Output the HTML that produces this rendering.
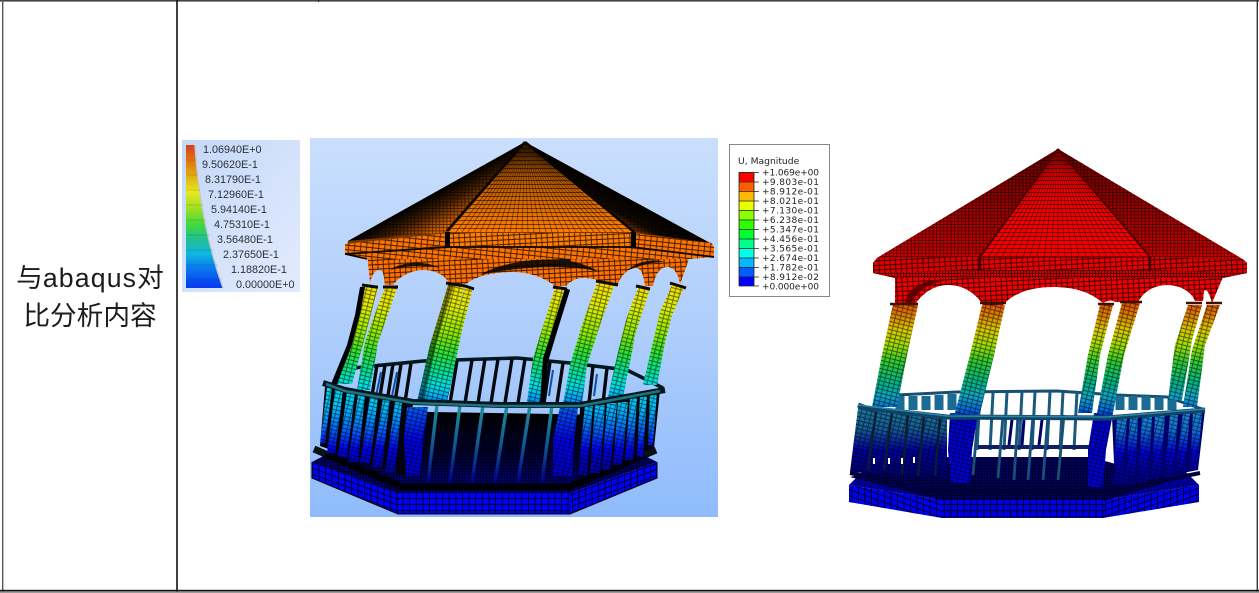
<!DOCTYPE html>
<html lang="zh">
<head>
<meta charset="utf-8">
<title>abaqus对比</title>
<style>
html,body{margin:0;padding:0;background:#fff;width:1259px;height:593px;overflow:hidden}
svg{display:block;position:absolute;left:0;top:0}
.t{position:absolute;left:3px;width:174px;text-align:center;font:26.67px/38px "Liberation Sans","Noto Sans CJK SC",sans-serif;color:#1c1c1c;top:259px}
.t span{letter-spacing:1.15px}
</style>
</head>
<body>
<svg width="1259" height="593" viewBox="0 0 1259 593" xmlns="http://www.w3.org/2000/svg">
<defs>
<linearGradient id="bg1" x1="0" y1="0" x2="0" y2="1"><stop offset="0" stop-color="#cadffd"/><stop offset=".5" stop-color="#afcefc"/><stop offset="1" stop-color="#8fbbfc"/></linearGradient>
<linearGradient id="lg1" x1="0" y1="0" x2="1" y2="1"><stop offset="0" stop-color="#c4d8f8"/><stop offset="1" stop-color="#e2ebfd"/></linearGradient>
<linearGradient id="bar1" x1="0" y1="0" x2="0" y2="1">
<stop offset="0" stop-color="#d8401a"/><stop offset=".1" stop-color="#e07010"/><stop offset=".22" stop-color="#e0b010"/><stop offset=".33" stop-color="#e8e820"/><stop offset=".44" stop-color="#a0e020"/><stop offset=".56" stop-color="#40d840"/><stop offset=".66" stop-color="#20c090"/><stop offset=".76" stop-color="#10b8e0"/><stop offset=".88" stop-color="#0870f0"/><stop offset="1" stop-color="#0838f0"/></linearGradient>
<linearGradient id="g1" gradientUnits="userSpaceOnUse" x1="0" y1="283" x2="0" y2="480">
<stop offset="0" stop-color="#f4dc00"/><stop offset=".12" stop-color="#dcec00"/><stop offset=".25" stop-color="#90e800"/><stop offset=".35" stop-color="#30e030"/><stop offset=".45" stop-color="#00e098"/><stop offset=".52" stop-color="#00e0e0"/><stop offset=".58" stop-color="#00a8f4"/><stop offset=".65" stop-color="#0050f4"/><stop offset=".8" stop-color="#0000ec"/><stop offset="1" stop-color="#0000c0"/></linearGradient>
<linearGradient id="g1b" gradientUnits="userSpaceOnUse" x1="0" y1="385" x2="0" y2="465">
<stop offset="0" stop-color="#00e4e4"/><stop offset=".3" stop-color="#00b8f8"/><stop offset=".55" stop-color="#0068f8"/><stop offset=".8" stop-color="#0000f4"/><stop offset="1" stop-color="#0000b0"/></linearGradient>
<linearGradient id="g1t" gradientUnits="userSpaceOnUse" x1="0" y1="405" x2="0" y2="482">
<stop offset="0" stop-color="#20909c"/><stop offset=".5" stop-color="#105a90"/><stop offset="1" stop-color="#000080"/></linearGradient>
<linearGradient id="fl1" gradientUnits="userSpaceOnUse" x1="0" y1="412" x2="0" y2="490">
<stop offset="0" stop-color="#000"/><stop offset=".4" stop-color="#000020"/><stop offset="1" stop-color="#00008c"/></linearGradient>
<linearGradient id="g2" gradientUnits="userSpaceOnUse" x1="0" y1="303" x2="0" y2="420">
<stop offset="0" stop-color="#e05000"/><stop offset=".12" stop-color="#d88800"/><stop offset=".22" stop-color="#dcc400"/><stop offset=".36" stop-color="#a0dc00"/><stop offset=".5" stop-color="#30c830"/><stop offset=".68" stop-color="#00b484"/><stop offset=".8" stop-color="#10a4c4"/><stop offset=".92" stop-color="#0064d4"/><stop offset="1" stop-color="#0000d0"/></linearGradient>
<linearGradient id="g2b" gradientUnits="userSpaceOnUse" x1="0" y1="400" x2="0" y2="475">
<stop offset="0" stop-color="#1a9cd4"/><stop offset=".4" stop-color="#1070d4"/><stop offset=".7" stop-color="#0000d8"/><stop offset="1" stop-color="#000090"/></linearGradient>
<linearGradient id="g2l" gradientUnits="userSpaceOnUse" x1="0" y1="405" x2="0" y2="475">
<stop offset="0" stop-color="#1a7a9a"/><stop offset=".35" stop-color="#145a94"/><stop offset=".65" stop-color="#0000a0"/><stop offset="1" stop-color="#000070"/></linearGradient>
<linearGradient id="fl2" gradientUnits="userSpaceOnUse" x1="0" y1="455" x2="0" y2="500">
<stop offset="0" stop-color="#00006c"/><stop offset="1" stop-color="#000060"/></linearGradient>
<linearGradient id="dkF1" gradientUnits="userSpaceOnUse" x1="0" y1="142" x2="0" y2="232">
<stop offset="0" stop-color="#000" stop-opacity=".6"/><stop offset=".45" stop-color="#000" stop-opacity=".25"/><stop offset="1" stop-color="#000" stop-opacity="0"/></linearGradient>
<linearGradient id="dkL1" gradientUnits="userSpaceOnUse" x1="447" y1="186" x2="464" y2="216">
<stop offset="0" stop-color="#000" stop-opacity="1"/><stop offset=".45" stop-color="#000" stop-opacity=".7"/><stop offset="1" stop-color="#000" stop-opacity=".12"/></linearGradient>
<linearGradient id="dkR1" gradientUnits="userSpaceOnUse" x1="633" y1="201" x2="618" y2="229">
<stop offset="0" stop-color="#000" stop-opacity="1"/><stop offset=".55" stop-color="#000" stop-opacity=".92"/><stop offset="1" stop-color="#000" stop-opacity=".25"/></linearGradient>
<linearGradient id="dkS2" gradientUnits="userSpaceOnUse" x1="0" y1="150" x2="0" y2="260">
<stop offset="0" stop-color="#000" stop-opacity=".55"/><stop offset="1" stop-color="#000" stop-opacity=".08"/></linearGradient>
<pattern id="mF" width="3" height="3" patternUnits="userSpaceOnUse"><path d="M0 .5H3M.5 0V3" stroke="#000" stroke-opacity=".6" stroke-width="1" fill="none"/></pattern>
<pattern id="mH" width="4" height="4" patternUnits="userSpaceOnUse"><path d="M0 .5H4" stroke="#000" stroke-opacity=".6" stroke-width=".9" fill="none"/></pattern>
<pattern id="mR" width="6" height="4.5" patternUnits="userSpaceOnUse" patternTransform="rotate(6)"><path d="M0 .5H6M.5 0V4.5" stroke="#000" stroke-opacity=".75" stroke-width=".9" fill="none"/></pattern>
<pattern id="mL" width="5.5" height="4.5" patternUnits="userSpaceOnUse" patternTransform="rotate(-3)"><path d="M0 .5H5.5M.5 0V4.5" stroke="#000" stroke-opacity=".75" stroke-width=".9" fill="none"/></pattern>
<pattern id="mC" width="5" height="4" patternUnits="userSpaceOnUse" patternTransform="rotate(14)"><path d="M0 .5H5M.5 0V4" stroke="#000" stroke-opacity=".55" stroke-width=".9" fill="none"/></pattern>
<pattern id="mB" width="6.6" height="6" patternUnits="userSpaceOnUse"><path d="M0 .5H6.6M.5 0V6" stroke="#000" stroke-opacity=".85" stroke-width=".9" fill="none"/></pattern>
<pattern id="mBL" width="6.5" height="6" patternUnits="userSpaceOnUse" patternTransform="skewY(20)"><path d="M0 .5H6.5M.5 0V6" stroke="#000" stroke-opacity=".85" stroke-width=".9" fill="none"/></pattern>
<pattern id="mBR" width="6.5" height="6" patternUnits="userSpaceOnUse" patternTransform="skewY(-20)"><path d="M0 .5H6.5M.5 0V6" stroke="#000" stroke-opacity=".85" stroke-width=".9" fill="none"/></pattern>
<pattern id="mS" width="3.6" height="3.2" patternUnits="userSpaceOnUse"><path d="M0 .5H3.6M.5 0V3.2" stroke="#000" stroke-opacity=".6" stroke-width=".9" fill="none"/></pattern>
<g id="c1">
<path d="M385 288H397L386 320 378 342 370 390H357L365 342 374 316Z"/>
<path d="M555 288H565L552 330 543 358 540 402H527L533 358 545 320Z"/>
<path d="M638 288H650L635 335 632 352 623 397H608L618 352 626 320Z"/>
<path d="M465 288H473L462 330 447 402H435L450 335Z"/>
<path d="M365 287H378L368 325 360 355 352 384H337L352 345 360 315Z"/>
<path d="M672 285H685L672 315 665 342 657 385H643L653 342 660 312Z"/>
<path d="M597 283H615L600 325 587 365 582 404H563L570 365 582 325Z"/>
<path d="M448 285H465L449 340 435 402H417L430 345Z"/>
<path d="M407 407H428L423 440 420 476H406L404 440Z"/>
<path d="M560 407H578L574 440 572 476H553L553 440Z"/>
</g>
<g id="b1">
<path d="M327 388h5l-7 55h-5zM335 390h8l-8 63h-8zM347 392h8l-8 65h-9zM358 395h7l-7 67h-10zM370 397h8l-8 66h-10zM383 398h7l-8 69h-10zM395 402h7l-7 70h-10z"/>
<path d="M650 392h7l-4 53h-5zM640 395h7l-4 62h-6zM630 398h7l-4 62h-8zM618 402h10l-6 63h-9zM607 403h10l-7 67h-8zM595 405h10l-5 68h-10zM585 405h8l-6 70h-9z"/>
</g>
<g id="c2">
<path d="M1188 305H1202L1192 340 1182 400H1168L1175 345Z"/>
<path d="M1207 305H1220L1205 345 1197 407H1183L1192 350Z"/>
<path d="M1100 305H1113L1100 355 1092 413H1078L1088 355Z"/>
<path d="M1122 303H1140L1124 355 1113 413H1097L1108 355Z"/>
<path d="M893 305H918L908 350 897 407H872L882 355Z"/>
<path d="M982 305H1005L994 355 980 413H955L970 355Z"/>
<path d="M950 413H978L972 450 970 483H951L948 450Z"/>
<path d="M1094 413H1113L1106 450 1103 487H1088L1088 450Z"/>
</g>
<g id="b2">
<path d="M1193 412h9l-5 58h-7zM1183 413h7l-5 57h-9zM1170 415h8l-5 60h-8zM1155 415h10l-5 63h-8zM1142 417h10l-4 65h-10zM1130 418h8l-3 67h-10zM1117 418h10l-5 66h-9z"/>
</g>
<path id="rad1" d="M525 142L456 232M525 142L462 232M525 142L468 232M525 142L474 232M525 142L480 232M525 142L486 232M525 142L492 232M525 142L498 232M525 142L504 232M525 142L510 232M525 142L516 232M525 142L522 232M525 142L528 232M525 142L534 232M525 142L540 232M525 142L546 232M525 142L552 232M525 142L558 232M525 142L564 232M525 142L570 232M525 142L576 232M525 142L582 232M525 142L588 232M525 142L594 232M525 142L600 232M525 142L606 232M525 142L612 232M525 142L618 232M525 142L624 232" stroke="#000" stroke-opacity=".55" stroke-width=".7" fill="none"/>
</defs>

<!-- table lines -->
<rect x="0" y="0" width="1259" height="1.6" fill="#444"/>
<rect x="2" y="0" width="1.4" height="593" fill="#555"/>
<rect x="176.2" y="0" width="1.6" height="593" fill="#111"/>
<rect x="1256.6" y="0" width="1.4" height="593" fill="#333"/>
<rect x="318" y="0" width="1" height="2" fill="#222"/>
<rect x="0" y="589.8" width="1259" height="1.6" fill="#111"/>
<rect x="0" y="591.6" width="1259" height="1.4" fill="#999"/>

<!-- legend 1 -->
<rect x="182" y="140" width="118" height="152" fill="url(#lg1)"/>
<path d="M186 145H195C197 180 204 235 223 288H186Z" fill="url(#bar1)"/>
<path d="M195 145C197 180 204 235 223 288" fill="none" stroke="#c4c8d4" stroke-width="1.4"/>
<path d="M186 160H197M186 175H198M186 190H200M186 205H203M186 220H206M186 235H210M186 250H214M186 265H218M186 280H221" stroke="#000" stroke-opacity=".12" stroke-width="1"/>
<g font-family="Liberation Sans,sans-serif" font-size="10.8" fill="#2c3038">
<text x="203" y="153">1.06940E+0</text>
<text x="202" y="168">9.50620E-1</text>
<text x="205" y="183">8.31790E-1</text>
<text x="208" y="198">7.12960E-1</text>
<text x="211" y="213">5.94140E-1</text>
<text x="214" y="228">4.75310E-1</text>
<text x="217" y="243">3.56480E-1</text>
<text x="223" y="258">2.37650E-1</text>
<text x="231" y="273">1.18820E-1</text>
<text x="236" y="288">0.00000E+0</text>
</g>

<!-- gazebo 1 background -->
<rect x="310" y="138" width="408" height="379" fill="url(#bg1)"/>

<!-- gazebo 1 base -->
<path d="M312 462L335 450H633L657 462 570 493H398Z" fill="#000070"/>
<path d="M312 462L335 450H633L657 462 570 493H398Z" fill="url(#mF)"/>
<path d="M312 462L398 493V514L312 478Z" fill="#0000f4"/><path d="M312 462L398 493V514L312 478Z" fill="url(#mBL)"/>
<path d="M398 493H570V514H398Z" fill="#0000f8"/><path d="M398 493H570V514H398Z" fill="url(#mB)"/>
<path d="M570 493L657 462V478L570 514Z" fill="#0000f4"/><path d="M570 493L657 462V478L570 514Z" fill="url(#mBR)"/>
<path d="M312 462V478L398 514H570L657 478V462" fill="none" stroke="#000" stroke-width="1"/>
<!-- floor -->
<path d="M400 413L583 417 633 467 567 490H400L333 460Z" fill="url(#fl1)"/>
<path d="M400 445L600 445 633 467 567 490H400L333 460Z" fill="url(#mF)"/>
<!-- plinth -->
<path d="M314 449L400 486M567 488L656 450M400 487H567" fill="none" stroke="#000" stroke-width="7" stroke-opacity=".92"/>
<!-- back rail, balusters -->
<path d="M353 368L423 361 517 358 570 363 627 370 663 388" fill="none" stroke="#03181c" stroke-width="3.6"/>
<path d="M377 365L371 402M385 365L379 402M393 364L387 402M401 364L395 402M411 363L405 402M457 361L450 403M472 360L465 403M485 359L478 403M498 359L491 403M512 359L505 403M525 359L518 403M550 362L544 403M563 363L557 403M593 366L589 403M607 368L603 403" fill="none" stroke="#03090f" stroke-width="3.4"/>
<path d="M381 372L376 396M397 372L392 396M553 370L549 396M597 374L594 396" fill="none" stroke="#0a50a8" stroke-width="2"/>
<path d="M400 413L585 416" stroke="#000" stroke-width="3" fill="none"/>
<!-- baluster backing -->
<path d="M325 387L413 404 405 476 320 446ZM580 406L660 390 654 448 578 478Z" fill="#03030f"/>
<use href="#b1" fill="url(#g1b)"/><use href="#b1" fill="url(#mC)"/>
<!-- thin balusters -->
<path d="M437 405L428 482M460 405L450 482M483 405L472 482M507 405L495 482M530 405L518 482M552 405L542 482" fill="none" stroke="url(#g1t)" stroke-width="3.4"/>
<!-- columns -->
<path d="M360 287L355 315 347 345 331 384H338L352 345 360 315 366 287Z" fill="#000"/>
<path d="M565 288L570 290 556 335 548 362 544 402H539L543 358 552 330Z" fill="#000"/>
<use href="#c1" fill="url(#g1)"/><use href="#c1" fill="url(#mC)"/>
<path d="M448 285L430 345 417 402 424 402 436 345 454 285Z" fill="#000" fill-opacity=".45"/>
<!-- front rail -->
<path d="M323 383L345 390 413 402 500 405 580 405 665 390" fill="none" stroke="#02161c" stroke-width="6"/>
<path d="M326 384L345 391 413 403 500 406 580 406 660 391" fill="none" stroke="#1d7480" stroke-width="2.6"/>
<!-- roof & band backing -->
<path d="M525 142L348 241 345 254 367 259H688L714 257V247L710 243Z" fill="#7a3800"/>
<!-- frieze -->
<path id="fr1" d="M367 252H690L688 262 680 284C678 272 673 267 667 267 660 267 655 275 653 286H645C644 278 642 268 636 268 628 268 621 276 618 284L601 282C596 279 590 278 583 278 575 278 570 282 566 286H555C545 278 530 272 513 272 495 272 475 276 466 284H450C445 276 437 270 423 270 410 270 398 278 393 285H385C384 278 384 270 379 270 374 270 371 278 370 283Z" fill="#ff7000"/>
<path d="M367 252H690L688 262 680 284C678 272 673 267 667 267 660 267 655 275 653 286H645C644 278 642 268 636 268 628 268 621 276 618 284L601 282C596 279 590 278 583 278 575 278 570 282 566 286H555C545 278 530 272 513 272 495 272 475 276 466 284H450C445 276 437 270 423 270 410 270 398 278 393 285H385C384 278 384 270 379 270 374 270 371 278 370 283Z" fill="url(#mL)"/>
<path d="M390 270C400 262 425 260 440 268 425 264 405 266 390 270ZM480 275C500 262 545 256 575 262 590 266 600 272 600 272 580 266 530 264 480 275ZM628 270C635 262 655 258 664 262 650 262 640 266 628 270Z" fill="#000" fill-opacity=".85"/>
<path d="M560 256h10v8h-10z" fill="#111"/>
<path d="M362 285L376 287 378 287M383 287H398M446 283L465 286 474 289M553 287L567 289M596 281L618 285M636 286L650 289M670 283L686 288" fill="none" stroke="#0a0a0a" stroke-width="3"/>
<!-- roof 1 -->
<path d="M525 142L348 241 449 232Z" fill="#ff7400"/><path d="M525 142L348 241 449 232Z" fill="url(#mS)"/><path d="M525 142L348 241 449 232Z" fill="url(#dkL1)"/>
<path d="M525 142L710 243 632 232Z" fill="#ff7400"/><path d="M525 142L710 243 632 232Z" fill="url(#mS)"/><path d="M525 142L710 243 632 232Z" fill="url(#dkR1)"/>
<path d="M525 142L449 232H632Z" fill="#ff7c00"/>
<path d="M525 142L449 232H632Z" fill="url(#mH)"/>
<clipPath id="cpF"><path d="M525 142L449 232H632Z"/></clipPath>
<use href="#rad1" clip-path="url(#cpF)"/>
<path d="M525 142L449 232H632Z" fill="url(#dkF1)"/>
<path d="M525 142L447 231M525 142L634 232" fill="none" stroke="#0a0400" stroke-width="2.6"/>
<!-- band 1 -->
<path d="M345 244L449 233V246L345 254ZM345 254L367 259H688L714 257V247L632 245H449Z" fill="#ff7400"/>
<path d="M345 244L449 233V246L345 254ZM345 254L367 259H688L714 257V247L632 245H449Z" fill="url(#mR)"/>
<path d="M449 233H632V246H449Z" fill="#ff7c00"/><path d="M449 233H632V246H449Z" fill="url(#mL)"/>
<path d="M632 233L712 243 714 247V257L632 247Z" fill="#ff7400"/><path d="M632 233L712 243 714 247V257L632 247Z" fill="url(#mR)"/>
<path d="M445 232h5v15h-5zM631 232h5v15h-5z" fill="#000"/>
<path d="M345 254L449 247H632L714 257" fill="none" stroke="#0c0500" stroke-width="1.8"/>
<path d="M367 259L345 254" stroke="#000" stroke-width="1.6"/>

<!-- legend 2 -->
<rect x="729.5" y="144.5" width="100" height="152" fill="#fff" stroke="#888"/>
<text x="738" y="164" font-family="DejaVu Sans,sans-serif" font-size="9.2" fill="#222">U, Magnitude</text>
<g>
<rect x="739" y="172" width="15" height="9.5" fill="#ff0000"/>
<rect x="739" y="181.5" width="15" height="9.5" fill="#ff5d00"/>
<rect x="739" y="191" width="15" height="9.5" fill="#ffb900"/>
<rect x="739" y="200.5" width="15" height="9.5" fill="#e8ff00"/>
<rect x="739" y="210" width="15" height="9.5" fill="#8bff00"/>
<rect x="739" y="219.5" width="15" height="9.5" fill="#2eff00"/>
<rect x="739" y="229" width="15" height="9.5" fill="#00ff2e"/>
<rect x="739" y="238.5" width="15" height="9.5" fill="#00ff8b"/>
<rect x="739" y="248" width="15" height="9.5" fill="#00ffe8"/>
<rect x="739" y="257.5" width="15" height="9.5" fill="#00b9ff"/>
<rect x="739" y="267" width="15" height="9.5" fill="#005dff"/>
<rect x="739" y="276.5" width="15" height="9.5" fill="#0000ff"/>
<path d="M739 172.5H759M739 182H759M739 191.5H759M739 201H759M739 210.5H759M739 220H759M739 229.5H759M739 239H759M739 248.5H759M739 258H759M739 267.5H759M739 277H759M739 286H759M739 172V286M754 172V286" stroke="#222" stroke-width=".8" fill="none"/>
</g>
<g font-family="DejaVu Sans,sans-serif" font-size="9" fill="#222">
<text x="762" y="175.5" textLength="57">+1.069e+00</text>
<text x="762" y="185" textLength="57">+9.803e-01</text>
<text x="762" y="194.5" textLength="57">+8.912e-01</text>
<text x="762" y="204" textLength="57">+8.021e-01</text>
<text x="762" y="213.5" textLength="57">+7.130e-01</text>
<text x="762" y="223" textLength="57">+6.238e-01</text>
<text x="762" y="232.5" textLength="57">+5.347e-01</text>
<text x="762" y="242" textLength="57">+4.456e-01</text>
<text x="762" y="251.5" textLength="57">+3.565e-01</text>
<text x="762" y="261" textLength="57">+2.674e-01</text>
<text x="762" y="270.5" textLength="57">+1.782e-01</text>
<text x="762" y="280" textLength="57">+8.912e-02</text>
<text x="762" y="289.5" textLength="57">+0.000e+00</text>
</g>

<!-- gazebo 2 base -->
<path d="M849 485L862 472H1186L1199 485 1103 500H942Z" fill="#00008c"/>
<path d="M849 485L942 500V518L849 502Z" fill="#0000f0"/><path d="M849 485L942 500V518L849 502Z" fill="url(#mBL)"/>
<path d="M942 500H1103V518H942Z" fill="#0000e4"/><path d="M942 500H1103V518H942Z" fill="url(#mB)"/>
<path d="M1103 500L1199 485V502L1103 518Z" fill="#0000f0"/><path d="M1103 500L1199 485V502L1103 518Z" fill="url(#mBR)"/>
<!-- floor 2 -->
<path d="M940 457L1090 457 1175 480 1107 500H940L850 477Z" fill="url(#fl2)"/>
<path d="M940 457L1090 457 1175 480 1107 500H940L850 477Z" fill="url(#mF)"/>
<path d="M850 473L940 492H1107L1200 473" fill="none" stroke="#00003c" stroke-width="4"/>
<!-- back rail 2 -->
<path d="M897 395L957 392 1057 391 1117 395 1167 397 1205 410" fill="none" stroke="#174f72" stroke-width="3"/>
<path d="M900 396V410M913 396V410M926 396V410M939 395V410M952 394V410M1120 396V410M1133 396V410M1146 396V410M1159 397V410M1172 398V410" fill="none" stroke="#1a6a94" stroke-width="9"/>
<path d="M980 393L977 450M993 393L990 450M1007 392L1004 450M1022 392L1019 450M1035 392L1032 450M1050 392L1047 450M1063 392L1060 450M1077 392L1074 450" fill="none" stroke="#1a5a80" stroke-width="3"/>
<path d="M978 447H1090" stroke="#101f60" stroke-width="4"/>
<path d="M978 415L973 475M1003 415L998 478M1018 415L1014 480M1033 415L1028 480M1048 415L1043 480M1064 415L1058 480" fill="none" stroke="#174f78" stroke-width="2.8"/>
<path d="M1042 420L1039 445M1024 420L1022 445M1012 420L1009 445" fill="none" stroke="#000068" stroke-width="3"/>
<!-- left baluster block 2 -->
<path d="M858 408L947 418 947 478 850 472Z" fill="url(#g2l)"/>
<path d="M858 408L947 418 947 478 850 472Z" fill="url(#mC)"/>
<path d="M876 412L868 470M892 413L884 470M908 415L902 474M924 416L918 476M940 417L935 476" stroke="#081c34" stroke-width="2.4" fill="none"/>
<path d="M874 458v6M889 458v6M902 458v6M914 457v6" stroke="#fff" stroke-width="2"/>
<!-- right baluster block 2 -->
<path d="M1112 417L1205 410 1198 470 1115 486Z" fill="#00006a"/>
<use href="#b2" fill="url(#g2b)"/><use href="#b2" fill="url(#mC)"/>
<!-- columns 2 -->
<use href="#c2" fill="url(#g2)"/><use href="#c2" fill="url(#mC)"/>
<!-- front rail 2 -->
<path d="M858 405L866 408 947 417 1107 418 1205 410" fill="none" stroke="#0f4464" stroke-width="5"/>
<path d="M858 405L947 416 1107 417 1205 409" fill="none" stroke="#2a85a8" stroke-width="1.6"/>
<!-- roof backing 2 -->
<path d="M1058 149L877 258 873 263V273L895 278H1223L1247 273V263L1244 260Z" fill="#a00000"/>
<!-- frieze 2 -->
<path d="M895 272H1223V277L1212 303C1210 296 1208 290 1205 290 1203 292 1204 296 1203 301H1195C1192 292 1180 285 1167 285 1152 285 1142 294 1138 302H1115C1113 300 1108 300 1103 303 1090 292 1075 287 1053 287 1030 287 1012 294 1003 305H983C975 292 962 285 948 285 932 285 920 296 915 305H895Z" fill="#f00000"/>
<path d="M895 272H1223V277L1212 303C1210 296 1208 290 1205 290 1203 292 1204 296 1203 301H1195C1192 292 1180 285 1167 285 1152 285 1142 294 1138 302H1115C1113 300 1108 300 1103 303 1090 292 1075 287 1053 287 1030 287 1012 294 1003 305H983C975 292 962 285 948 285 932 285 920 296 915 305H895Z" fill="url(#mL)"/>
<path d="M905 302C908 288 925 278 948 280 930 282 915 292 912 303Z" fill="#600000"/>
<path d="M890 304H918M980 303H1006M1098 304H1114M1120 302H1142M1186 303H1202M1206 303H1222" stroke="#3a1200" stroke-width="2.4" fill="none"/>
<!-- roof 2 -->
<path d="M1058 149L877 258 980 257Z" fill="#e80000"/><path d="M1058 149L877 258 980 257Z" fill="url(#mS)"/><path d="M1058 149L877 258 980 257Z" fill="url(#dkS2)"/>
<path d="M1058 149L1244 260 1150 257Z" fill="#e80000"/><path d="M1058 149L1244 260 1150 257Z" fill="url(#mS)"/><path d="M1058 149L1244 260 1150 257Z" fill="url(#dkS2)"/>
<path d="M1058 149L980 257H1150Z" fill="#f40000"/><path d="M1058 149L980 257H1150Z" fill="url(#mH)"/>
<clipPath id="cpF2"><path d="M1058 149L980 257H1150Z"/></clipPath>
<path clip-path="url(#cpF2)" d="M1058 149L988 257M1058 149L995 257M1058 149L1002 257M1058 149L1009 257M1058 149L1016 257M1058 149L1023 257M1058 149L1030 257M1058 149L1037 257M1058 149L1044 257M1058 149L1051 257M1058 149L1058 257M1058 149L1065 257M1058 149L1072 257M1058 149L1079 257M1058 149L1086 257M1058 149L1093 257M1058 149L1100 257M1058 149L1107 257M1058 149L1114 257M1058 149L1121 257M1058 149L1128 257M1058 149L1135 257M1058 149L1142 257" stroke="#000" stroke-opacity=".5" stroke-width=".7" fill="none"/>
<path d="M1058 149L980 257M1058 149L1150 257" fill="none" stroke="#500000" stroke-width="2"/>
<path d="M873 263L877 258 980 257V270L873 273ZM1150 257L1244 260 1247 263V273L1150 270Z" fill="#e00000"/>
<path d="M980 257H1150V270H980Z" fill="#ee0000"/>
<path d="M873 263L877 258 980 257V270L873 273ZM1150 257L1244 260 1247 263V273L1150 270ZM980 257H1150V270H980Z" fill="url(#mL)"/>
<path d="M873 273L895 278H1223L1247 273 1150 270H980Z" fill="#d80000"/>
<path d="M873 273L895 278H1223L1247 273 1150 270H980Z" fill="url(#mF)"/>
<path d="M980 256v14M1150 256v14" stroke="#400000" stroke-width="2.4"/>
<path d="M980 257H1150" stroke="#7a0000" stroke-width="1.4"/>
</svg>
<div class="t">与<span>abaqus</span>对<br>比分析内容</div>
</body>
</html>
